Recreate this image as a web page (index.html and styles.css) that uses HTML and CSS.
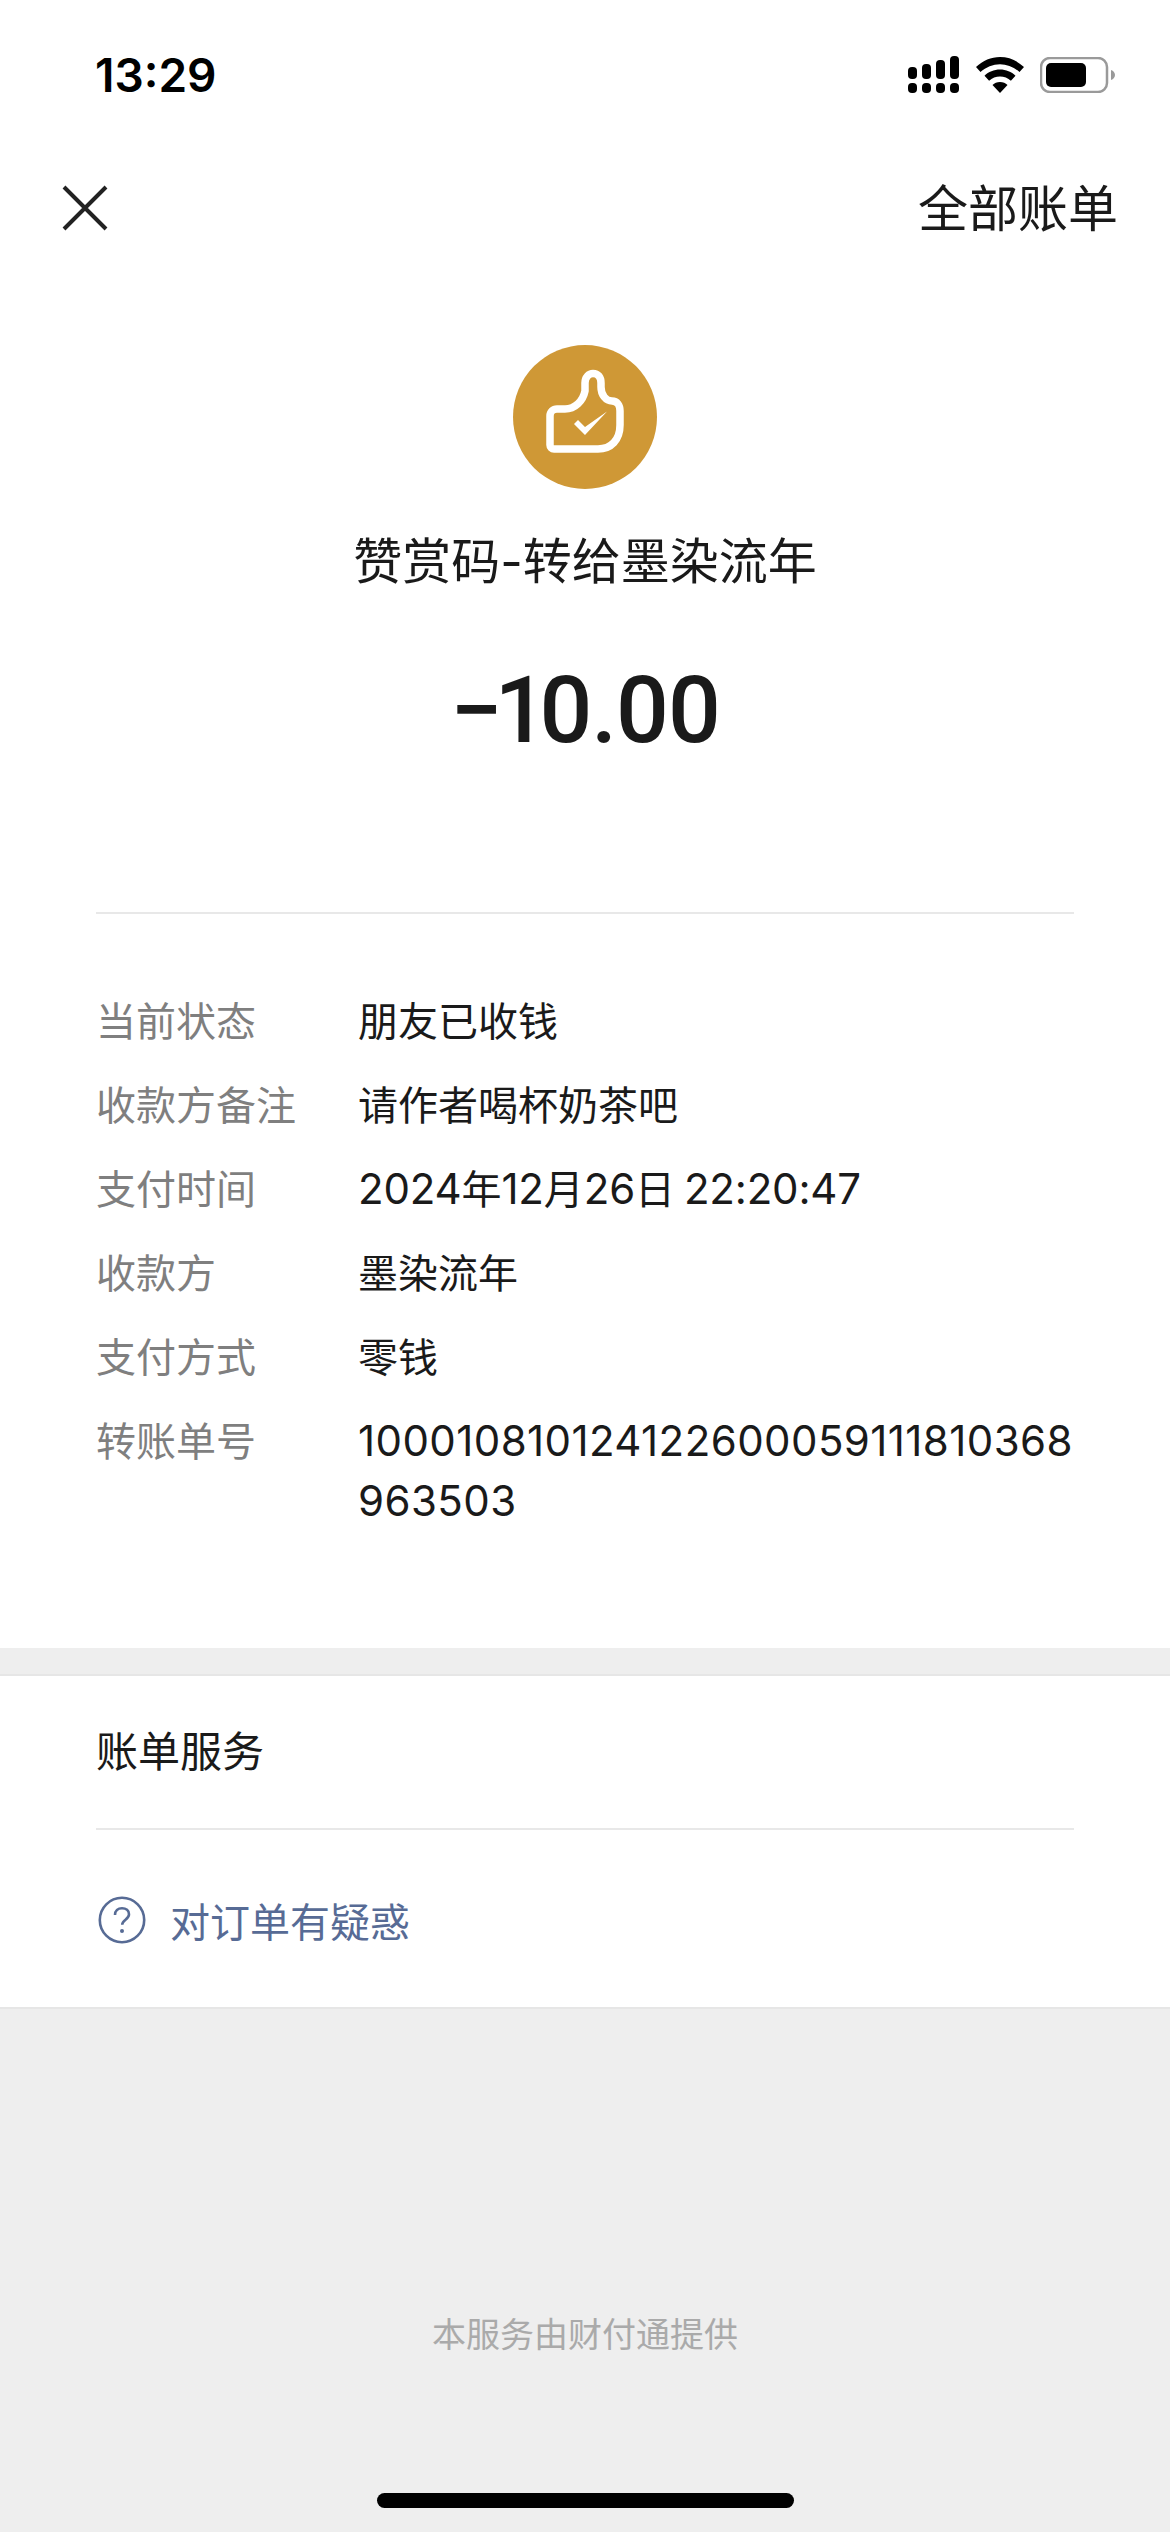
FILE: index.html
```html
<!DOCTYPE html>
<html lang="zh-CN">
<head>
<meta charset="utf-8">
<title>账单详情</title>
<link rel="stylesheet" href="styles.css">
</head>
<body>
<div class="page">
  <div class="status">
    <span class="time">13:29</span>
    <div class="status-icons">
      <svg class="signal" width="52" height="37" viewBox="0 0 52 37"><g fill="#000"><rect x="0" y="11" width="9" height="12" rx="4"/><rect x="14" y="8" width="9" height="15" rx="4"/><rect x="28" y="4" width="9" height="19" rx="4"/><rect x="42" y="0" width="9" height="23" rx="4"/><rect x="0" y="27" width="9" height="10" rx="4"/><rect x="14" y="27" width="9" height="10" rx="4"/><rect x="28" y="27" width="9" height="10" rx="4"/><rect x="42" y="27" width="9" height="10" rx="4"/></g></svg>
      <svg class="wifi" width="48" height="36" viewBox="0 0 48 36"><path d="M24 0C15 0 7 3.500 0 10l4.500 5C10 10 17 7.200 24 7.200S38 10 43.500 15l4.500-5C41 3.500 33 0 24 0z"/><path d="M24 12.500c-6 0-11.500 2.300-15.500 6.200l4.600 5C16 21 20 19.500 24 19.500s8 1.500 10.900 4.200l4.600-5C35.500 14.800 30 12.500 24 12.500z"/><path d="M24 25c-3 0-5.600 1-7.500 3L24 36l7.500-8c-1.900-2-4.500-3-7.500-3z"/></svg>
      <svg class="battery" width="76" height="36" viewBox="0 0 76 36"><rect x="1" y="1" width="66" height="34" rx="9" fill="none" stroke="#9a9a9a" stroke-width="2.500"/><rect x="6" y="6" width="40" height="24" rx="5" fill="#000"/><path d="M71 13c2.500 .8 4 2.800 4 5s-1.500 4.200-4 5z" fill="#9a9a9a"/></svg>
    </div>
  </div>
  <div class="nav">
    <svg class="close" width="46" height="46" viewBox="0 0 46 46"><path d="M2 2l42 42M44 2L2 44" stroke="#222" stroke-width="4" fill="none"/></svg>
    <span class="all-bills">全部账单</span>
  </div>
  <div class="summary">
    <div class="avatar">
      <svg width="144" height="144" viewBox="0 0 144 144"><path d="M44 64H52C62 64 70 56 72 46V38C72 32 76 28.500 80 28.500C85 28.500 88 32 88 38V42C88 50 93 56 99 56C104 56 107 60 107 66V80C107 95 98 104 85 104H41C38.800 104 37 102.200 37 100V71C37 67 40 64 44 64Z" fill="none" stroke="#fff" stroke-width="7.500" stroke-linejoin="round"/><path d="M61 79L65 75L72 82L94 66.500L72 90Z" fill="#fff"/></svg>
    </div>
    <div class="title">赞赏码-转给墨染流年</div>
    <div class="amount"><span class="tight">−1</span>0.00</div>
  </div>
  <div class="details">
    <div class="row"><span class="label">当前状态</span><span class="value">朋友已收钱</span></div>
    <div class="row"><span class="label">收款方备注</span><span class="value">请作者喝杯奶茶吧</span></div>
    <div class="row"><span class="label">支付时间</span><span class="value"><span class="num">2024</span>年<span class="num">12</span>月<span class="num">26</span>日 <span class="num">22:20:47</span></span></div>
    <div class="row"><span class="label">收款方</span><span class="value">墨染流年</span></div>
    <div class="row"><span class="label">支付方式</span><span class="value">零钱</span></div>
    <div class="row"><span class="label">转账单号</span><span class="value"><span class="num num-long">100010810124122600059111810368963503</span></span></div>
  </div>
  <div class="services">
    <div class="services-title">账单服务</div>
    <div class="services-link">
      <svg width="48" height="48" viewBox="0 0 48 48"><circle cx="24" cy="24" r="22.200" fill="none" stroke="#576b95" stroke-width="2.600"/><path d="M17 19c0-4.200 3-6.800 7-6.800s7 2.400 7 6c0 5.400-6.800 5.600-6.800 10.600" fill="none" stroke="#576b95" stroke-width="2.600"/><circle cx="24" cy="35" r="2" fill="#576b95"/></svg>
      <span>对订单有疑惑</span>
    </div>
  </div>
  <div class="footer">
    <div class="provider">本服务由财付通提供</div>
    <div class="home-bar"></div>
  </div>
</div>
</body>
</html>
```
FILE: styles.css
```css
* { box-sizing: border-box; }
html, body { margin: 0; padding: 0; }
body { background: #eeeeee; font-family: "Liberation Sans", "Noto Sans CJK SC", sans-serif; }
.page { width: 1170px; height: 2532px; display: flex; flex-direction: column; overflow: hidden; }
.status { height: 150px; background: #fff; display: flex; justify-content: space-between; align-items: flex-start; padding: 48px 54px 0 95px; }
.time { font-family: Inter, sans-serif; font-weight: 600; font-size: 46px; line-height: 54px; color: #000; }
.status-icons { display: flex; align-items: center; gap: 16px; padding-top: 8px; }
.nav { height: 122px; background: #fff; display: flex; justify-content: space-between; align-items: flex-start; padding: 35px 52px 0 62px; }
.all-bills { font-family: "Noto Sans CJK SC", sans-serif; font-size: 50px; line-height: 40px; color: #1a1a1a; }
.summary { background: #fff; height: 640px; display: flex; flex-direction: column; align-items: center; padding-top: 73px; }
.avatar { width: 144px; height: 144px; border-radius: 50%; background: #cf9836; }
.avatar svg { display: block; }
.title { margin-top: 41px; font-family: Inter, "Noto Sans CJK SC", sans-serif; font-size: 49px; line-height: 64px; color: #1a1a1a; }
.amount { margin-top: 62px; font-family: Roboto, sans-serif; font-weight: 500; font-size: 93px; line-height: 110px; letter-spacing: -1px; color: #1a1a1a; }
.tight { letter-spacing: -8px; }
.details { background: #fff; height: 736px; padding: 77px 96px 0; position: relative; }
.details::before { content: ""; position: absolute; left: 96px; right: 96px; top: 0; height: 2px; background: #e8e8e8; }
.row { display: flex; font-family: "Noto Sans CJK SC", sans-serif; font-size: 40px; line-height: 60px; margin-bottom: 24px; }
.label { width: 262px; flex: none; color: #7f7f7f; }
.value { color: #1a1a1a; word-break: break-all; min-width: 0; }
.num { font-family: Inter, sans-serif; font-size: 42px; line-height: 1; letter-spacing: -0.2px; }
.num-long { letter-spacing: 0.42px; }
.services { background: #fff; margin-top: 26px; height: 335px; padding: 0 96px; border-top: 2px solid #e6e6e6; border-bottom: 2px solid #e6e6e6; }
.services-title { height: 154px; border-bottom: 2px solid #e8e8e8; padding-top: 43px; font-family: "Noto Sans CJK SC", sans-serif; font-size: 42px; line-height: 60px; color: #1a1a1a; }
.services-link { display: flex; align-items: center; gap: 24px; margin-top: 65px; margin-left: 2px; font-family: "Noto Sans CJK SC", sans-serif; font-size: 40px; line-height: 50px; color: #576b95; }
.services-link svg { display: block; flex: none; }
.footer { flex: 1; display: flex; flex-direction: column; align-items: center; padding-top: 299px; }
.provider { font-family: "Noto Sans CJK SC", sans-serif; font-size: 34px; line-height: 50px; color: #aaaaaa; }
.home-bar { width: 417px; height: 15px; border-radius: 8px; background: #000; margin-top: 135px; }
```
